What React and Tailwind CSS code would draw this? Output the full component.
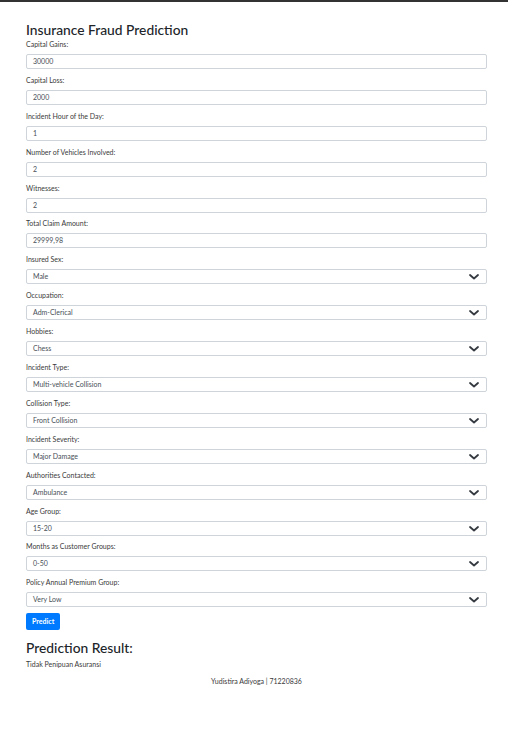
import React from "react";

const inputs = [
  ["Capital Gains:", "30000"],
  ["Capital Loss:", "2000"],
  ["Incident Hour of the Day:", "1"],
  ["Number of Vehicles Involved:", "2"],
  ["Witnesses:", "2"],
  ["Total Claim Amount:", "29999,98"],
];
const selects = [
  ["Insured Sex:", "Male"],
  ["Occupation:", "Adm-Clerical"],
  ["Hobbies:", "Chess"],
  ["Incident Type:", "Multi-vehicle Collision"],
  ["Collision Type:", "Front Collision"],
  ["Incident Severity:", "Major Damage"],
  ["Authorities Contacted:", "Ambulance"],
  ["Age Group:", "15-20"],
  ["Months as Customer Groups:", "0-50"],
  ["Policy Annual Premium Group:", "Very Low"],
];

function Chevron() {
  return (
    <svg width="10" height="6" viewBox="0 0 10 6" className="absolute right-[7px] top-[4px]">
      <path d="M1 1 L5 4.5 L9 1" fill="none" stroke="#343a40" strokeWidth="1.8" strokeLinecap="round" strokeLinejoin="round" />
    </svg>
  );
}

export default function App() {
  return (
    <div className="min-h-[733px] w-[508px] bg-white border-t-2 border-[#333] text-[#212529]" style={{ fontFamily: 'Lato, "Open Sans", sans-serif' }}>
      <div className="pl-[26px] pr-[21px] pt-[19px]">
        <h1 className="text-[13.8px] leading-[18px] font-medium text-[#212529] h-[18px]">Insurance Fraud Prediction</h1>
        {inputs.map(([l, v]) => (
          <div key={l} className="mb-[5.9px]">
            <div className="text-[7px] leading-[10px] h-[10px] mb-[5px] text-[#3a3a3a]">{l}</div>
            <div className="h-[15px] border border-[#ced4da] rounded-[2px] px-[6px] text-[7px] leading-[13px] text-[#495057]">{v}</div>
          </div>
        ))}
        {selects.map(([l, v]) => (
          <div key={l} className="mb-[5.9px]">
            <div className="text-[7px] leading-[10px] h-[10px] mb-[5px] text-[#3a3a3a]">{l}</div>
            <div className="relative h-[15px] border border-[#ced4da] rounded-[2px] px-[6px] text-[7px] leading-[13px] text-[#495057]">
              {v}
              <Chevron />
            </div>
          </div>
        ))}
        <div className="w-fit bg-[#007bff] text-white text-[7px] font-bold rounded-[2px] h-[17px] leading-[17px] px-[6px]">Predict</div>
        <h2 className="text-[13.8px] leading-[18px] font-medium mt-[9px] text-[#212529]">Prediction Result:</h2>
        <div className="text-[7px] leading-[10px] mt-[2px] text-[#3a3a3a]">Tidak Penipuan Asuransi</div>
        <div className="text-[7px] leading-[10px] mt-[7px] text-center text-[#3a3a3a]">Yudistira Adiyoga | 71220836</div>
      </div>
    </div>
  );
}
